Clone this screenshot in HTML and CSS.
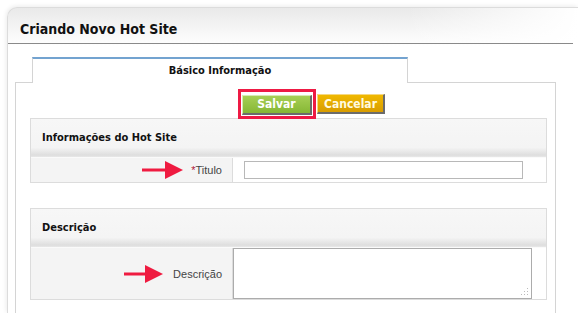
FILE: index.html
```html
<!DOCTYPE html>
<html lang="pt">
<head>
    <meta charset="UTF-8">
    <title>Criando Novo Hot Site</title>
    <link rel="stylesheet" href="styles.css">
</head>
<body>
    <div class="frame">
        <h1 class="page-title">Criando Novo Hot Site</h1>

        <div class="tabs">
            <div class="tab">Básico Informação</div>
        </div>

        <div class="tab-body">
            <div class="actions">
                <div class="highlight">
                    <button class="btn btn-save">Salvar</button>
                </div>
                <button class="btn btn-cancel">Cancelar</button>
            </div>

            <div class="section">
                <div class="section-head">Informações do Hot Site</div>
                <div class="row">
                    <div class="label-cell">
                        <svg class="arrow" width="41" height="18" viewBox="0 0 41 18"><rect x="0" y="7.5" width="26" height="3" fill="#ef1b40"/><polygon points="23,0 41,9 23,18" fill="#ef1b40"/></svg>
                        <span class="label"><span class="req">*</span>Titulo</span>
                    </div>
                    <div class="field-cell">
                        <input type="text" class="text-input">
                    </div>
                </div>
            </div>

            <div class="section section-desc">
                <div class="section-head">Descrição</div>
                <div class="row row-tall">
                    <div class="label-cell">
                        <svg class="arrow arrow-2" width="39" height="18" viewBox="0 0 39 18"><rect x="0" y="7.5" width="24" height="3" fill="#ef1b40"/><polygon points="21,0 39,9 21,18" fill="#ef1b40"/></svg>
                        <span class="label">Descrição</span>
                    </div>
                    <div class="field-cell field-flush">
                        <textarea class="text-area"></textarea>
                    </div>
                </div>
            </div>
        </div>
    </div>
</body>
</html>
```

FILE: styles.css
```css
body {
    margin: 0;
    background: #fff;
    font-family: "Liberation Sans", Arial, sans-serif;
    color: #333;
    overflow: hidden;
}

.frame {
    margin: 7px 0 0 7px;
    height: 305px;
    border-top: 1px solid #dcdcdc;
    border-left: 1px solid #dcdcdc;
    border-top-left-radius: 10px;
    box-shadow: -1px -1px 4px rgba(0,0,0,0.08);
    background:
        linear-gradient(to right, rgba(255,255,255,0) 70%, #fff 100%),
        linear-gradient(#e9e9e9 0, #fff 38px);
}

.page-title {
    margin: 0 5px 0 0;
    padding: 13px 0 6px 12px;
    font-family: "DejaVu Sans Condensed", "Liberation Sans", sans-serif;
    font-size: 14px;
    line-height: 16px;
    font-weight: bold;
    color: #111;
    border-bottom: 1px solid #8a8a8a;
}

.tabs {
    display: flex;
    padding: 13px 0 0 24px;
}

.tab {
    position: relative;
    z-index: 1;
    width: 374px;
    height: 24px;
    margin-bottom: -1px;
    background: #fff;
    border-top: 2px solid #73a3d0;
    border-left: 1px solid #d4d4d4;
    border-right: 1px solid #d4d4d4;
    text-align: center;
    line-height: 23px;
    font-family: "DejaVu Sans Condensed", "Liberation Sans", sans-serif;
    font-size: 11px;
    font-weight: bold;
    color: #111;
}

.tab-body {
    margin-left: 7px;
    width: 539px;
    height: 240px;
    border-top: 1px solid #d4d4d4;
    border-left: 1px solid #d4d4d4;
    border-right: 1px solid #d4d4d4;
    background: #fff;
}

.actions {
    display: flex;
    align-items: flex-start;
    gap: 1px;
    padding: 6px 0 0 222px;
    height: 29px;
}

.highlight {
    border: 3px solid #ee1a44;
    padding: 2px 1px 1px 1px;
}

.btn {
    height: 20px;
    margin: 0;
    padding: 0;
    border: none;
    border-right: 2px solid #6b6b6b;
    border-bottom: 2px solid #6b6b6b;
    font-family: "DejaVu Sans Condensed", "Liberation Sans", sans-serif;
    font-size: 12px;
    font-weight: bold;
    color: #fff;
    cursor: pointer;
}

.btn-save {
    width: 70px;
    background: linear-gradient(#a6cf55, #86b735);
    border-left: 1px solid #d7eab4;
    border-top: 1px solid #d7eab4;
}

.btn-cancel {
    width: 68px;
    margin-top: 5px;
    color: #fffbe0;
    background: linear-gradient(#f0b800, #d89c00);
    border-left: 1px solid #f5d880;
    border-top: 1px solid #f5d880;
}

.section {
    margin: 0 8px 0 14px;
    border: 1px solid #dcdcdc;
    border-bottom: none;
}

.section-desc {
    margin-top: 25px;
}

.section-head {
    height: 38px;
    padding-left: 11px;
    line-height: 38px;
    background: linear-gradient(#f7f7f7 0, #f4f4f4 75%, #dedede 95%, #e8e8e8 100%);
    border-bottom: 1px solid #fafafa;
    font-family: "DejaVu Sans Condensed", "Liberation Sans", sans-serif;
    font-size: 11px;
    font-weight: bold;
    color: #111;
}

.row {
    display: flex;
    height: 24px;
    border-bottom: 1px solid #dcdcdc;
}

.row-tall {
    height: 51px;
}

.label-cell {
    display: flex;
    align-items: center;
    justify-content: flex-end;
    gap: 8px;
    width: 191px;
    padding-right: 10px;
    background: #f4f4f4;
    border-right: 1px solid #dcdcdc;
}

.arrow {
    flex: none;
}

.arrow-2 {
    margin-right: 2px;
}

.label {
    font-size: 11px;
    color: #444;
}

.req {
    color: #b0173a;
}

.field-cell {
    display: flex;
    align-items: center;
    padding-left: 11px;
}

.field-flush {
    padding-left: 0;
    align-items: stretch;
}

.text-input {
    width: 275px;
    height: 14px;
    margin: 0;
    padding: 1px;
    border: 1px solid #b8b8b8;
    outline: none;
}

/* grip dots drawn instead of the native resize handle */
.text-area {
    width: 297px;
    height: 49px;
    margin: 0;
    padding: 0;
    border: 1px solid #acacac;
    outline: none;
    resize: none;
    background:
        radial-gradient(circle, #bbb 0.8px, transparent 1px) right 2px bottom 2px / 3px 3px no-repeat,
        radial-gradient(circle, #bbb 0.8px, transparent 1px) right 5px bottom 2px / 3px 3px no-repeat,
        radial-gradient(circle, #bbb 0.8px, transparent 1px) right 8px bottom 2px / 3px 3px no-repeat,
        radial-gradient(circle, #bbb 0.8px, transparent 1px) right 2px bottom 5px / 3px 3px no-repeat,
        radial-gradient(circle, #bbb 0.8px, transparent 1px) right 5px bottom 5px / 3px 3px no-repeat,
        radial-gradient(circle, #bbb 0.8px, transparent 1px) right 2px bottom 8px / 3px 3px no-repeat,
        #fff;
}
```
